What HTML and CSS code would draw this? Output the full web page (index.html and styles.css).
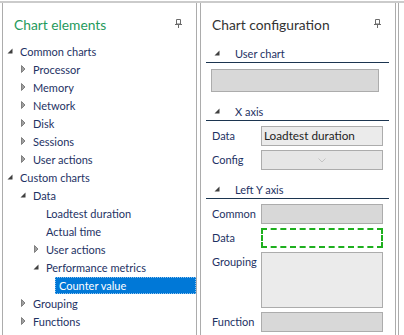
FILE: index.html
```html
<!DOCTYPE html>
<html lang="en">
<head>
    <meta charset="UTF-8">
    <meta name="viewport" content="width=device-width, initial-scale=1.0">
    <title>Chart designer</title>
    <link rel="stylesheet" href="styles.css">
</head>
<body>
    <div class="workspace">
        <div class="panel elements">
            <div class="panel-head">
                <span class="panel-title green">Chart elements</span>
                <svg class="pin" width="7" height="9" viewBox="0 0 7 9"><path d="M1.5 0.5h4v4.5h-4z M0 5.5h7 M3.5 5.5v3.5" fill="none" stroke="#6b6b6b"/></svg>
            </div>
            <ul class="tree">
                <li class="node lvl0"><span class="tw open"></span>Common charts</li>
                <li class="node lvl1"><span class="tw closed"></span>Processor</li>
                <li class="node lvl1"><span class="tw closed"></span>Memory</li>
                <li class="node lvl1"><span class="tw closed"></span>Network</li>
                <li class="node lvl1"><span class="tw closed"></span>Disk</li>
                <li class="node lvl1"><span class="tw closed"></span>Sessions</li>
                <li class="node lvl1"><span class="tw closed"></span>User actions</li>
                <li class="node lvl0"><span class="tw open"></span>Custom charts</li>
                <li class="node lvl1"><span class="tw open"></span>Data</li>
                <li class="node lvl2"><span class="tw"></span>Loadtest duration</li>
                <li class="node lvl2"><span class="tw"></span>Actual time</li>
                <li class="node lvl2"><span class="tw closed"></span>User actions</li>
                <li class="node lvl2"><span class="tw open"></span>Performance metrics</li>
                <li class="node lvl3"><span class="tw"></span><span class="selected">Counter value</span></li>
                <li class="node lvl1"><span class="tw closed"></span>Grouping</li>
                <li class="node lvl1"><span class="tw closed"></span>Functions</li>
            </ul>
        </div>

        <div class="panel config">
            <div class="panel-head">
                <span class="panel-title">Chart configuration</span>
                <svg class="pin" width="7" height="9" viewBox="0 0 7 9"><path d="M1.5 0.5h4v4.5h-4z M0 5.5h7 M3.5 5.5v3.5" fill="none" stroke="#6b6b6b"/></svg>
            </div>

            <div class="section-head first"><span class="tw open"></span>User chart</div>
            <div class="field wide"></div>

            <div class="section-head"><span class="tw open"></span>X axis</div>
            <div class="row">
                <span class="label">Data</span>
                <div class="field light">Loadtest duration</div>
            </div>
            <div class="row">
                <span class="label">Config</span>
                <div class="field combo">
                    <svg width="8" height="5" viewBox="0 0 8 5"><path d="M0.5 0.5l3.5 3.5l3.5-3.5" fill="none" stroke="#c4c4c4"/></svg>
                </div>
            </div>

            <div class="section-head"><span class="tw open"></span>Left Y axis</div>
            <div class="row">
                <span class="label">Common</span>
                <div class="field"></div>
            </div>
            <div class="row">
                <span class="label">Data</span>
                <div class="field drop"></div>
            </div>
            <div class="row">
                <span class="label">Grouping</span>
                <div class="field light tall"></div>
            </div>
            <div class="row">
                <span class="label">Function</span>
                <div class="field"></div>
            </div>
        </div>

        <div class="edge"></div>
    </div>
</body>
</html>
```

FILE: styles.css
```css
body {
    margin: 0;
    background: #fff;
    font-family: Lato, "Noto Sans", sans-serif;
    font-size: 11px;
    color: #1e3264;
    overflow: hidden;
}
.workspace {
    display: flex;
    height: 332px;
    margin-top: 1px;
    padding-left: 2px;
    border-top: 2px solid #cbcbcb;
}
.panel {
    border-left: 1px solid #acacac;
    border-right: 1px solid #acacac;
    overflow: hidden;
}
.elements {
    width: 193px;
}
.config {
    width: 194px;
    margin-left: 3px;
}
.edge {
    width: 1px;
    margin-left: 2px;
    background: #acacac;
}
.panel-head {
    display: flex;
    align-items: center;
    justify-content: space-between;
    height: 39px;
    padding: 0 14px 0 11px;
}
.panel-title {
    font-size: 13.8px;
    color: #333;
    margin-top: 3px;
}
.panel-title.green {
    color: #1f9a5c;
}
.pin {
    margin-top: 1px;
}

/* tree */
.tree {
    list-style: none;
    margin: 0;
    padding: 0;
}
.node {
    display: flex;
    align-items: center;
    height: 18px;
    white-space: nowrap;
}
.lvl0 { padding-left: 4px; }
.lvl1 { padding-left: 17px; }
.lvl2 { padding-left: 30px; }
.lvl3 { padding-left: 43px; }
.tw {
    flex: none;
    width: 13px;
    height: 8px;
    background-repeat: no-repeat;
}
.tw.open {
    background-image: url("data:image/svg+xml;utf8,<svg xmlns='http://www.w3.org/2000/svg' width='6' height='6'><path d='M5.5 0.5v5h-5z' fill='%23404040'/></svg>");
    background-position: 0 1px;
}
.tw.closed {
    background-image: url("data:image/svg+xml;utf8,<svg xmlns='http://www.w3.org/2000/svg' width='5' height='8'><path d='M0.5 0.5l3.5 3.5l-3.5 3.5z' fill='%23a0a0a0' stroke='%23808080'/></svg>");
    background-position: 1px 0;
}
.selected {
    flex: 1;
    margin-left: -4px;
    padding-left: 4px;
    height: 17px;
    line-height: 17px;
    background: #0078d7;
    color: #fff;
    outline: 1px dotted #8fc3ee;
    outline-offset: -1px;
}

/* config form */
.section-head {
    display: flex;
    align-items: center;
    height: 18px;
    margin: 10px 6px 0 5px;
    padding-left: 8px;
    border-bottom: 1px solid #1c3550;
}
.section-head.first {
    margin-top: 2px;
}
.section-head .tw {
    width: 21px;
}
.row {
    display: flex;
    align-items: flex-start;
    margin-top: 4px;
    padding-left: 11px;
}
.section-head + .row {
    margin-top: 5px;
}
.label {
    width: 49px;
    line-height: 20px;
}
.field {
    box-sizing: border-box;
    width: 122px;
    height: 20px;
    background: #d8d8d8;
    border: 1px solid #acacac;
}
.field.wide {
    width: 168px;
    height: 23px;
    margin: 6px 0 0 10px;
}
.field.light {
    background: #ebebeb;
    padding-left: 2px;
    font-size: 11.75px;
    line-height: 18px;
    color: #1f1f1f;
}
.field.combo {
    display: flex;
    align-items: center;
    justify-content: center;
    background: #e6e6e6;
}
.field.drop {
    background: #fff;
    border: 2px dashed #1eaf1e;
}
.field.tall {
    height: 56px;
}
```
